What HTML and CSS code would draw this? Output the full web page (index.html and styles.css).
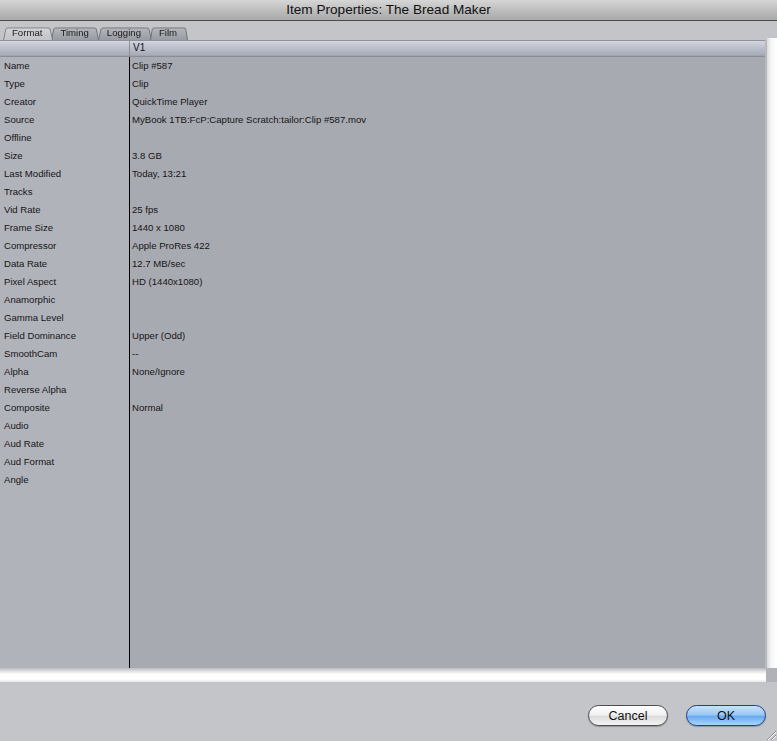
FILE: index.html
```html
<!DOCTYPE html>
<html lang="en">
<head>
    <meta charset="UTF-8">
    <title>Item Properties: The Bread Maker</title>
    <link rel="stylesheet" href="styles.css">
</head>
<body>
    <div class="window">
        <div class="titlebar">Item Properties: The Bread Maker</div>

        <div class="tabbar">
            <div class="tab active">Format</div>
            <div class="tab">Timing</div>
            <div class="tab">Logging</div>
            <div class="tab">Film</div>
        </div>

        <div class="content">
            <div class="table">
                <div class="table-head">
                    <div class="col-label"></div>
                    <div class="col-value">V1</div>
                </div>
                <div class="table-body">
                    <div class="row"><span class="label">Name</span><span class="value">Clip #587</span></div>
                    <div class="row"><span class="label">Type</span><span class="value">Clip</span></div>
                    <div class="row"><span class="label">Creator</span><span class="value">QuickTime Player</span></div>
                    <div class="row"><span class="label">Source</span><span class="value">MyBook 1TB:FcP:Capture Scratch:tailor:Clip #587.mov</span></div>
                    <div class="row"><span class="label">Offline</span><span class="value"></span></div>
                    <div class="row"><span class="label">Size</span><span class="value">3.8 GB</span></div>
                    <div class="row"><span class="label">Last Modified</span><span class="value">Today, 13:21</span></div>
                    <div class="row"><span class="label">Tracks</span><span class="value"></span></div>
                    <div class="row"><span class="label">Vid Rate</span><span class="value">25 fps</span></div>
                    <div class="row"><span class="label">Frame Size</span><span class="value">1440 x 1080</span></div>
                    <div class="row"><span class="label">Compressor</span><span class="value">Apple ProRes 422</span></div>
                    <div class="row"><span class="label">Data Rate</span><span class="value">12.7 MB/sec</span></div>
                    <div class="row"><span class="label">Pixel Aspect</span><span class="value">HD (1440x1080)</span></div>
                    <div class="row"><span class="label">Anamorphic</span><span class="value"></span></div>
                    <div class="row"><span class="label">Gamma Level</span><span class="value"></span></div>
                    <div class="row"><span class="label">Field Dominance</span><span class="value">Upper (Odd)</span></div>
                    <div class="row"><span class="label">SmoothCam</span><span class="value">--</span></div>
                    <div class="row"><span class="label">Alpha</span><span class="value">None/Ignore</span></div>
                    <div class="row"><span class="label">Reverse Alpha</span><span class="value"></span></div>
                    <div class="row"><span class="label">Composite</span><span class="value">Normal</span></div>
                    <div class="row"><span class="label">Audio</span><span class="value"></span></div>
                    <div class="row"><span class="label">Aud Rate</span><span class="value"></span></div>
                    <div class="row"><span class="label">Aud Format</span><span class="value"></span></div>
                    <div class="row"><span class="label">Angle</span><span class="value"></span></div>
                </div>
            </div>
            <div class="vscroll"></div>
        </div>

        <div class="hscroll-row">
            <div class="hscroll"></div>
            <div class="corner"></div>
        </div>

        <div class="footer">
            <button class="btn">Cancel</button>
            <button class="btn btn-default">OK</button>
            <svg class="grip" width="12" height="12" viewBox="0 0 12 12">
                <line x1="11" y1="2" x2="2" y2="11" stroke="#8c8d92" stroke-width="1"/>
                <line x1="11" y1="6" x2="6" y2="11" stroke="#8c8d92" stroke-width="1"/>
                <line x1="11" y1="3" x2="3" y2="11" stroke="#ffffff" stroke-width="1"/>
                <line x1="11" y1="7" x2="7" y2="11" stroke="#ffffff" stroke-width="1"/>
            </svg>
        </div>
    </div>
</body>
</html>
```

FILE: styles.css
```css
body {
    margin: 0;
    background-color: #c4c5c9;
    font-family: "Liberation Sans", Arial, sans-serif;
    overflow: hidden;
}

.window {
    display: flex;
    flex-direction: column;
    width: 777px;
    height: 741px;
}

.titlebar {
    height: 20px;
    line-height: 20px;
    text-align: center;
    font-size: 13.6px;
    color: #111;
    background: linear-gradient(#d6d6d6, #b9b9b9 60%, #a9a9a9);
    border-bottom: 1px solid #4a4a4a;
}

.tabbar {
    display: flex;
    height: 14px;
    padding: 5px 0 0 3px;
    background-color: #c4c5c9;
}

.tab {
    position: relative;
    height: 14px;
    line-height: 14px;
    padding: 0 11px 0 9px;
    margin-right: -2px;
    font-size: 9.6px;
    color: #1a1a1a;
    z-index: 1;
}

.tab::before {
    content: '';
    position: absolute;
    top: 0;
    bottom: 0;
    left: 0;
    right: 0;
    z-index: -1;
    background: linear-gradient(#b4b6bc, #9a9ca4);
    border: 1px solid #6f7177;
    border-bottom: none;
    border-radius: 3px 3px 0 0;
    transform: perspective(14px) rotateX(7deg);
    transform-origin: bottom;
}

.tab.active {
    z-index: 5;
}

.tab.active::before {
    background: linear-gradient(#d2d3d7, #c3c4c9);
    border-color: #7c7e84;
}

.content {
    display: flex;
    height: 628px;
}

.table {
    display: flex;
    flex-direction: column;
    flex: 1;
    border-right: 2px solid #b8b9be;
}

.table-head {
    display: flex;
    height: 15px;
    border-top: 1px solid #8e919a;
    border-bottom: 1px solid #8a8d96;
    background: linear-gradient(#d3d6e0, #bcc0cc 45%, #a9adb9 90%, #9b9fab);
    font-size: 10px;
    line-height: 14px;
    color: #111;
}

.col-label {
    width: 129px;
    border-right: 1px solid #8f9199;
}

.col-value {
    padding-left: 3px;
}

.table-body {
    flex: 1;
    background: linear-gradient(to right, #b1b3bb 129px, #000 129px, #000 130px, #a8aab2 130px);
}

.row {
    display: flex;
    height: 18px;
    line-height: 17px;
    font-size: 9.6px;
    color: #151515;
}

.label {
    width: 126px;
    padding-left: 4px;
}

.value {
    padding-left: 2px;
}

.vscroll {
    width: 10px;
    margin-top: -2px;
    background: linear-gradient(to right, #d9d9db, #f6f6f6 40%, #ffffff);
}

.hscroll-row {
    display: flex;
    height: 14px;
}

.hscroll {
    flex: 1;
    background: linear-gradient(#b9babe, #e4e4e6 25%, #ffffff 45%, #ffffff 80%, #e6e6e8);
}

.corner {
    width: 11px;
    background-color: #b0b2b8;
}

.footer {
    position: relative;
    display: flex;
    justify-content: flex-end;
    align-items: flex-start;
    gap: 18px;
    flex: 1;
    padding: 23px 11px 0 0;
}

.btn {
    width: 80px;
    height: 21px;
    border: 1px solid #4c4c50;
    border-radius: 11px;
    font-family: "Liberation Sans", Arial, sans-serif;
    font-size: 12.5px;
    color: #111;
    padding: 0;
    background: linear-gradient(#ffffff, #f1f1f1 45%, #dcdcdc 55%, #f4f4f4);
    box-shadow: 0 1px 1px rgba(0, 0, 0, 0.25);
}

.btn-default {
    border-color: #1f3f8c;
    background: linear-gradient(#c9e2fb, #9bc9f5 45%, #6aaaf0 55%, #a8d6fb);
}

.grip {
    position: absolute;
    right: 0;
    bottom: 0;
}
```
